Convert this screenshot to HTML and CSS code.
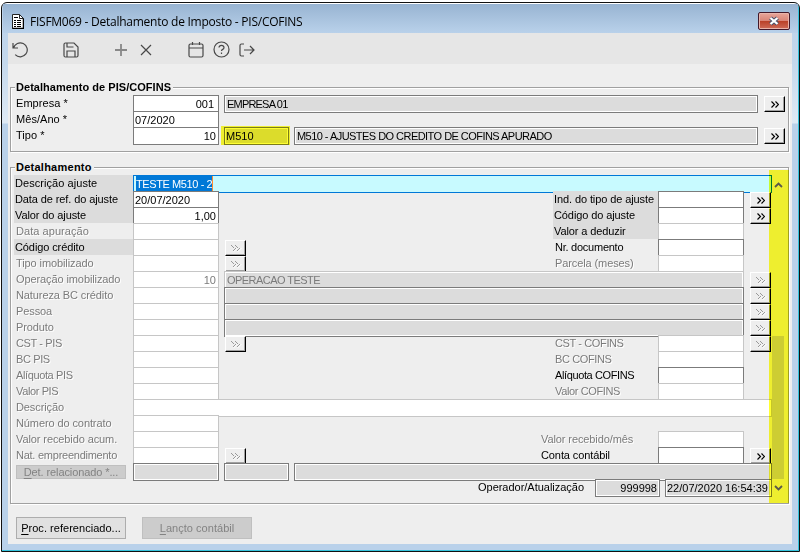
FILE: index.html
```
<!DOCTYPE html>
<html lang="pt-BR">
<head>
<meta charset="utf-8">
<title>FISFM069</title>
<link rel="stylesheet" href="styles.css">
</head>
<body>
<div class="window">
  <header class="titlebar">
    <svg class="doc" width="12" height="15" viewBox="0 0 12 15"><path d="M.5.5h7l4 4v10H.5z" fill="#fff" stroke="#222"/><path d="M11.500 4.500v10H.5" fill="none" stroke="#000" stroke-width="1.500"/><path d="M7.500.5v4h4" fill="none" stroke="#222"/><path d="M2 3.500h4M2 6.500h2M5 6.500h4M2 8.500h2M5 8.500h4M2 10.500h2M5 10.500h4M2 12.500h2M5 12.500h4" stroke="#000"/></svg>
    <h1>FISFM069 - Detalhamento de Imposto - PIS/COFINS</h1>
    <button class="close"><svg width="12" height="10" viewBox="0 0 12 10"><path d="M2.500 2l7 6M9.500 2l-7 6" stroke="#46516b" stroke-width="4.200"/><path d="M2.500 2l7 6M9.500 2l-7 6" stroke="#fff" stroke-width="2.300"/></svg></button>
  </header>
  <div class="client">
    <nav class="toolbar">
      <svg class="t1" width="18" height="16" viewBox="0 0 18 16"><path d="M1 1v5h5M1.500 6A7 7 0 1 1 3.200 12.700"/></svg>
      <svg class="t2" width="16" height="16" viewBox="0 0 16 16"><path d="M2.500 1h8.500l4 4v8.500q0 1.500-1.500 1.500h-11Q1 15 1 13.500v-11Q1 1 2.500 1zM4 1v4h6.500M4 15V9h8v6"/></svg>
      <svg class="t3 light" width="14" height="14" viewBox="0 0 14 14"><path d="M7 1v12M1 7h12"/></svg>
      <svg class="t4" width="12" height="12" viewBox="0 0 12 12"><path d="M1 1l10 10M11 1L1 11"/></svg>
      <svg class="t5" width="16" height="17" viewBox="0 0 16 17"><path d="M2.500 3h11q1.500 0 1.500 1.500v10q0 1.500-1.500 1.500h-11Q1 16 1 14.500v-10Q1 3 2.500 3zM1 7h14M4.500 1v3M11.500 1v3"/></svg>
      <svg class="t6" width="17" height="17" viewBox="0 0 17 17"><circle cx="8.500" cy="8.500" r="7.500"/><path d="M6 6.500q.2-2.200 2.500-2.200T11 6.500q0 1.200-1.300 1.900T8.500 10M8.500 11.500v1.500"/></svg>
      <svg class="t7" width="16" height="14" viewBox="0 0 16 14"><path d="M5 1H2.500Q1 1 1 2.500v9Q1 13 2.500 13H5M5 7h10M11 3l4 4-4 4"/></svg>
    </nav>
    <section class="group first">
      <h2>Detalhamento de PIS/COFINS</h2>
      <div class="top-grid">
        <label class="c1">Empresa *</label><span class="field c2 num r5">001</span><span class="field ro cw tight">EMPRESA 01</span><button class="more cb">»</button>
        <label class="c1 n2">Mês/Ano *</label><span class="field c2 n2">07/2020</span>
        <label class="c1 n3">Tipo *</label><span class="field c2 num n3">10</span><span class="field ro c3 n3 marked">M510</span><span class="field ro c4 n3 caps">M510 - AJUSTES DO CREDITO DE COFINS APURADO</span><button class="more cb n3">»</button>
      </div>
    </section>
    <section class="group second">
      <h2>Detalhamento</h2>
      <div class="rows" id="rows"></div>
      <div class="scrollbar">
        <svg width="9" height="6" viewBox="0 0 9 6"><path d="M1 5l3.500-3.500L8 5"/></svg>
        <i></i>
        <svg width="9" height="6" viewBox="0 0 9 6"><path d="M1 1l3.500 3.500L8 1"/></svg>
      </div>
    </section>
    <footer class="actions">
      <button><span><u>P</u>roc. referenciado...</span></button>
      <button class="disabled"><span><u>L</u>ançto contábil</span></button>
    </footer>
  </div>
</div>
<script src="rows.js"></script>
</body>
</html>
```
FILE: rows.js
```
const rows = document.getElementById('rows');
function add(row, cls, html, tag = 'span') {
  const el = document.createElement(tag);
  el.className = cls;
  el.style.gridRow = row;
  el.innerHTML = html;
  rows.append(el);
}
// Each entry: label, label state, value, field state
const left = [
  ['Descrição ajuste', 'shade loose', '<mark>TESTE M510 - 2</mark>', 'full active'],
  ['Data de ref. do ajuste', 'shade', '20/07/2020', ''],
  ['Valor do ajuste', 'shade', '1,00', 'num'],
  ['Data apuração', 'off loose', '', 'dim'],
  ['Código crédito', 'shade', '', 'dim'],
  ['Tipo imobilizado', 'off', '', 'dim'],
  ['Operação imobilizado', 'off', '10', 'dim num'],
  ['Natureza BC crédito', 'off', '', 'dim'],
  ['Pessoa', 'off', '', 'dim'],
  ['Produto', 'off', '', 'dim'],
  ['CST - PIS', 'off caps', '', 'dim'],
  ['BC PIS', 'off caps', '', 'dim'],
  ['Alíquota PIS', 'off caps', '', 'dim'],
  ['Valor PIS', 'off caps', '', 'dim'],
  ['Descrição', 'off', '', 'dim full'],
  ['Número do contrato', 'off', '', 'dim'],
  ['Valor recebido acum.', 'off', '', 'dim'],
  ['Nat. empreendimento', 'off snug', '', 'dim']
];
const right = {
  2: ['Ind. do tipo de ajuste', 'shade', ''],
  3: ['Código do ajuste', 'shade', ''],
  4: ['Valor a deduzir', 'shade', 'dim'],
  5: ['Nr. documento', 'snug', ''],
  6: ['Parcela (meses)', 'off', 'dim'],
  11: ['CST - COFINS', 'off caps', 'dim'],
  12: ['BC COFINS', 'off caps', 'dim'],
  13: ['Alíquota COFINS', 'caps', ''],
  14: ['Valor COFINS', 'off caps', 'dim'],
  17: ['Valor recebido/mês', 'off wide', 'dim'],
  18: ['Conta contábil', 'wide', '']
};
const wide = { 7: 'OPERACAO TESTE', 8: '', 9: '', 10: '' };
left.forEach(([text, state, value, field], i) => {
  const r = i + 1;
  add(r, 'c1 ' + state, text, 'label');
  add(r, 'field c2 ' + field, value);
  if ([5, 6, 11, 18].includes(r)) add(r, 'more c3b off', '', 'button');
  if (r in wide) add(r, 'field ro cw caps' + (r === 7 ? ' dim' : ''), wide[r]);
  if (right[r]) {
    add(r, 'c5 ' + right[r][1], right[r][0], 'label');
    add(r, 'field c6 ' + right[r][2], '');
  }
  if ([2, 3, 18].includes(r)) add(r, 'more cb', '»', 'button');
  if ([7, 8, 9, 10, 11].includes(r)) add(r, 'more cb off', '', 'button');
});
add(19, 'related', '<span><u>D</u>et. relacionado *...</span>', 'button');
add(19, 'field ro c2', '');
add(19, 'field ro c3', '');
add(19, 'field ro c4e', '');
add(20, 'audit', '<label>Operador/Atualização</label><span class="field ro num">999998</span><span class="field ro">22/07/2020 16:54:39</span>', 'div');
document.querySelectorAll('.more').forEach(b => {
  b.innerHTML = b.classList.contains('off')
    ? '<svg width="12" height="9" viewBox="0 0 12 9"><path class="lit" d="M3.500 8l4-4M7.500 8l4-4"/><path d="M1 1.500h1M2 2.500h1M3 3.500h1M5 1.500h1M6 2.500h1M7 3.500h1M5 4.500h1M4 5.500h1M3 6.500h1M9 4.500h1M8 5.500h1M7 6.500h1"/></svg>'
    : '<svg width="8" height="7" viewBox="0 0 8 7"><path d="M.5.500l3 3-3 3M4.500.500l3 3-3 3"/></svg>';
});
```
FILE: styles.css
```
* { box-sizing: border-box; }
body { margin: 0; width: 803px; height: 555px; overflow: hidden; background: #fff; font: 11px/16px "Liberation Sans", Arial, sans-serif; color: #000; letter-spacing: -.1px; }
h1, h2 { margin: 0; font-size: 11px; }
button { padding: 0; font: inherit; letter-spacing: inherit; }
.window { margin: 2px 0 0 1px; width: 799px; height: 550px; border: 1px solid #111; border-radius: 6px 6px 0 0; background: linear-gradient(#b9d1ea 0, #c4d8ec 60px, #dfeaf5 120px, #b9d1ea 121px); box-shadow: inset -1px -1px #35c3dc, inset 0 1px #fff; padding: 0 7px 7px 6px; }
.titlebar { height: 29px; margin: 1px -6px 0 -5px; padding: 0 8px 0 8px; display: flex; align-items: center; background: linear-gradient(#98b4d2, #b9d1ea); }
.doc { margin-left: 1px; margin-top: 5px; }
h1 { font: 12px/18px "Open Sans", sans-serif; letter-spacing: -.25px; margin: 6px auto 0 6px; white-space: nowrap; }
.close { width: 32px; height: 18px; margin-top: 5px; border: 1px solid #43192a; border-radius: 2px; background: linear-gradient(#e8a69a 0, #d98577 48%, #b93f27 50%, #cf6b58); box-shadow: inset 0 0 0 1px #e9b4aa; display: grid; place-items: center; }
.client { height: 511px; background: #eee; overflow: hidden; }
.toolbar { height: 31px; background: #e6e6e6; display: flex; align-items: center; padding: 2px 0 0 4px; }
.toolbar svg { fill: none; stroke: #484848; stroke-width: 1.200; }
.toolbar .light { stroke: #888; stroke-width: 1.800; }
.t2 { margin-left: 33px; } .t3 { margin-left: 35px; } .t4 { margin-left: 12px; } .t5 { margin-left: 36px; } .t6 { margin-left: 9px; } .t7 { margin-left: 9px; }
.group { position: relative; width: 779px; margin-left: 2px; border: 1px solid #a0a0a0; box-shadow: inset 1px 1px #fff, 1px 1px #fff; }
.first { margin-top: 23px; height: 65px; }
.second { margin-top: 15px; height: 337px; }
h2 { position: absolute; top: -9px; left: 4px; padding: 0 2px 0 1px; background: #eee; line-height: 16px; white-space: nowrap; letter-spacing: .25px; }
.first h2 { letter-spacing: .04px; }
.top-grid, .rows { display: grid; grid-template-columns: 119px 86px 5px 65px 5px 259px 105px 86px 6px 22px; grid-auto-rows: 16px; margin-left: 3px; white-space: nowrap; }
.top-grid { padding-top: 7px; grid-template-columns: 119px 86px 5px 65px 5px 464px 6px 22px; }
.rows { padding-top: 7px; }
.first label { padding-left: 2px; letter-spacing: .05px; }
.n2 { grid-row: 2; } .n3 { grid-row: 3; }
.c1 { grid-column: 1; } .c2 { grid-column: 2; } .c3 { grid-column: 4; } .c4 { grid-column: 6; }
.c3b { grid-column: 4; margin-left: 1px; }
.cw { grid-column: 4 / 9; } .first .cw { grid-column: 4 / 7; }
.c4e { grid-column: 6 / 11; }
.c5 { grid-column: 7; } .c6 { grid-column: 8; } .cb { grid-column: 10; } .first .cb { grid-column: 8; }
.full { grid-column: 2 / 11; }
label.shade { background: #dcdcdc; line-height: 17px; height: 16px; padding-left: 1px; }
label.off { color: #7b7b7b; text-shadow: 1px 1px #fff; padding-left: 2px; }
.c5:not(.shade) { padding-left: 2px; }
.c5.wide { margin-left: -14px; }
label.loose { letter-spacing: .06px; }
label.snug { letter-spacing: -.25px; }
label.caps { letter-spacing: -.38px; }
.field { height: 18px; border: 1px solid #7b7b7b; background: #fff; line-height: 16px; padding: 0 2px 0 1px; letter-spacing: 0; }
.field.dim { border-color: #c6c6c6; color: #7b7b7b; }
.field.ro { background: #dcdcdc; border: 1px solid #7b7b7b; box-shadow: inset 0 0 0 1px #fff; }
.field.ro.dim { border-color: #c6c6c6; }
.field.caps { letter-spacing: -.54px; padding-left: 2px; }
.field.tight { letter-spacing: -.8px; padding-left: 2px; }
.num { text-align: right; }
.num.r5 { padding-right: 4px; }
.field.active { border-color: #0078d7; background: #c8faff; letter-spacing: -.4px; }
mark { display: inline-block; height: 15px; margin-left: 1px; background: #0078d7; color: #fff; border-right: 1px solid #ff8b30; vertical-align: top; }
.marked { position: relative; }
.marked::after { content: ""; position: absolute; inset: -2px -2px -1px -4px; background: #ffff32; mix-blend-mode: multiply; }
.more { width: 21px; height: 16px; margin-top: 1px; border: solid; border-width: 1px; border-color: #fff #000 #000 #fff; box-shadow: inset -1px -1px #a0a0a0; background: #eee; display: grid; place-items: center; }
.more svg { fill: none; stroke: #000; stroke-width: 1.200; }
.more.off svg { stroke: #999; stroke-width: 1; }
.more.off .lit { stroke: #fff; }
.related { width: 110px; height: 14px; margin: 2px 0 0 2px; border: 1px solid #bfbfbf; background: #ccc; color: #838383; line-height: 12px; }
.audit { grid-column: 1 / 11; display: flex; justify-content: flex-end; }
.audit label { margin-right: 11px; letter-spacing: -.02px; }
.audit .field { width: 65px; margin-right: 5px; }
.audit .field:last-child { width: 107px; margin: 0; }
.scrollbar { position: absolute; top: 2px; right: -1px; width: 20px; height: 333px; background: #ffff32; mix-blend-mode: multiply; display: flex; flex-direction: column; align-items: center; padding: 12px 1px 12px 0; }
.scrollbar svg { fill: none; stroke: #605f50; stroke-width: 1.800; }
.scrollbar i { width: 12px; height: 143px; margin: auto 1px 6px 0; background: #dcdc36; }
.actions { display: flex; gap: 16px; margin: 13px 0 0 8px; }
.actions button { width: 110px; height: 22px; border: 1px solid #adadad; background: #e1e1e1; letter-spacing: .03px; }
.actions .disabled { background: #ccc; border-color: #bfbfbf; color: #838383; }
u { text-underline-offset: 2px; }
```
